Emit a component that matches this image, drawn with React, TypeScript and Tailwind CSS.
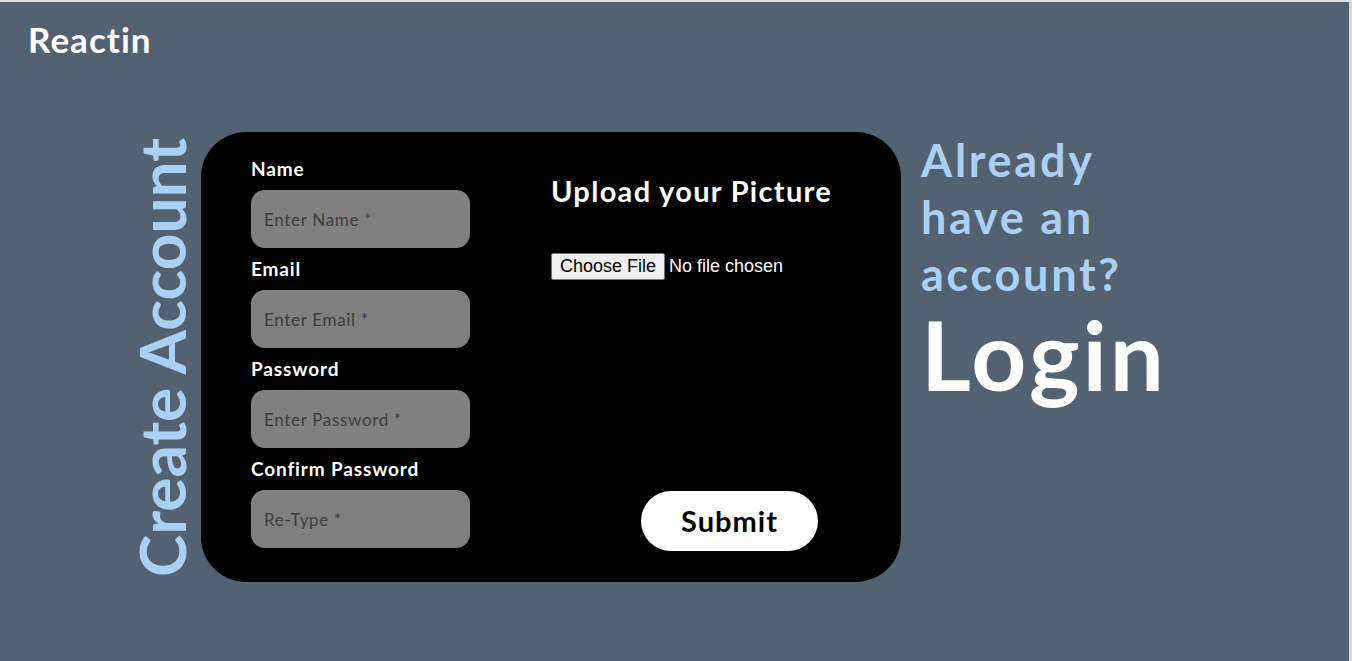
import React from "react";

const font = "font-['Lato','Open_Sans',sans-serif] [font-variant-ligatures:none]";

function Field({ label, placeholder, type = "text" }: { label: string; placeholder: string; type?: string }) {
  return (
    <div className="flex flex-col">
      <label className="text-[19px] leading-[24px] font-bold tracking-[0.045em] text-white">{label}</label>
      <input
        type={type}
        placeholder={placeholder}
        className="mt-[9px] mb-[9px] h-[58px] w-[219px] rounded-[14px] bg-[#808080] px-[13px] text-[17px] tracking-[0.04em] text-[#3a3a3a] placeholder:text-[#3d3d3d] outline-none"
      />
    </div>
  );
}

export default function App() {
  return (
    <div className={`${font} min-h-[661px] w-full bg-[#536271] border-t-2 border-[#e2e2e2] border-r-[3px] border-r-[#d6d6d6]`}>
      <header className="pl-[28px] pt-[16px]">
        <h1 className="text-[35px] leading-[42px] font-bold tracking-[0.03em] text-white">Reactin</h1>
      </header>
      <main className="mt-[72px] flex items-start pl-[130px]">
        <div className="flex h-[450px] w-[71px] items-center justify-start">
          <span className="[writing-mode:vertical-rl] rotate-180 text-[64px] leading-[64px] font-bold text-[#acd0f3] whitespace-nowrap">
            Create Account
          </span>
        </div>
        <div className="flex h-[450px] w-[700px] rounded-[45px] bg-black pl-[50px] pt-[25px]">
          <form className="flex flex-col">
            <Field label="Name" placeholder="Enter Name *" />
            <Field label="Email" placeholder="Enter Email *" type="email" />
            <Field label="Password" placeholder="Enter Password *" type="password" />
            <Field label="Confirm Password" placeholder="Re-Type *" type="password" />
          </form>
          <div className="ml-[81px] flex flex-col pt-[16px]">
            <h2 className="text-[29px] leading-[36px] font-bold tracking-[0.045em] text-white">Upload your Picture</h2>
            <input
              type="file"
              className="mt-[44px] font-['Liberation_Sans',Arial,sans-serif] text-[18px] leading-[21px] text-white file:mr-[4px] file:rounded-[2px] file:border file:border-[#767676] file:bg-[#efefef] file:px-[8px] file:py-[2px] file:text-black"
            />
            <button
              type="button"
              className="mt-[211px] ml-[90px] h-[60px] w-[177px] rounded-full bg-white text-[29px] font-bold tracking-[0.035em] text-black"
            >
              Submit
            </button>
          </div>
        </div>
        <div className="ml-[20px] flex flex-col">
          <p className="text-[45px] leading-[57px] font-bold tracking-[0.06em] text-[#acd0f3]">
            Already
            <br />
            have an
            <br />
            account?
          </p>
          <p className="mt-[-4px] text-[96px] leading-[110px] font-bold tracking-[0.03em] text-white">Login</p>
        </div>
      </main>
    </div>
  );
}
